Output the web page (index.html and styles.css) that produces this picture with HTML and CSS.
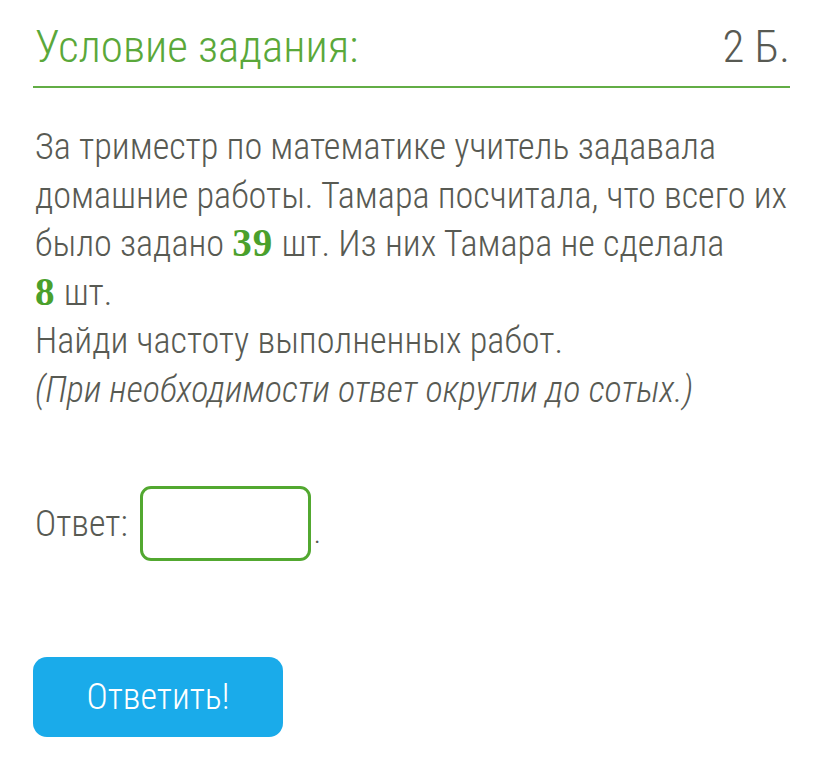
FILE: index.html
```html
<!DOCTYPE html>
<html lang="ru">
<head>
<meta charset="utf-8">
<link rel="stylesheet" href="styles.css">
</head>
<body>
<div class="page">
  <div class="header">
    <div class="title">Условие задания:</div>
    <div class="points">2 Б.</div>
  </div>
  <div class="task">
    <p class="text">За триместр по математике учитель задавала домашние работы. Тамара посчитала, что всего их было задано <span class="num">39</span> шт. Из них Тамара не сделала <span class="nowrap"><span class="num">8</span> шт.</span></p>
    <p class="text">Найди частоту выполненных работ.</p>
    <p class="text hint">(При необходимости ответ округли до сотых.)</p>
  </div>
  <div class="answer">
    <span class="label">Ответ:</span>
    <span class="box"></span>
    <span class="dot">.</span>
  </div>
  <button class="submit">Ответить!</button>
</div>
</body>
</html>
```

FILE: styles.css
```css
html, body {
  margin: 0;
  padding: 0;
  background: #ffffff;
}
.page {
  padding: 19px 33px 0 35px;
  font-family: "Roboto Condensed", Roboto, "Liberation Sans", sans-serif;
  font-weight: 300;
  font-stretch: condensed;
  color: #585a53;
}
.header {
  display: flex;
  justify-content: space-between;
  align-items: baseline;
  font-size: 45px;
  line-height: 55px;
  padding-bottom: 12px;
  border-bottom: 2px solid #62ad45;
  margin-left: -2px;
  padding-left: 2px;
}
.title {
  color: #5aa83a;
}
.points {
  color: #585a53;
}
.task {
  margin-top: 35px;
}
.text {
  margin: 0;
  font-size: 36.2px;
  line-height: 48.5px;
}
.nowrap {
  white-space: nowrap;
}
.hint {
  font-style: italic;
}
.num {
  font-family: "Liberation Serif", "DejaVu Serif", serif;
  font-weight: 700;
  font-size: 39px;
  line-height: 1;
  color: #4aa02c;
  font-stretch: normal;
  font-style: normal;
  letter-spacing: 1px;
}
.answer {
  display: flex;
  align-items: center;
  margin-top: 72px;
  font-size: 36px;
}
.label {
  margin-right: 12px;
}
.box {
  display: inline-block;
  width: 165px;
  height: 69px;
  border: 3px solid #52a830;
  border-radius: 11px;
}
.dot {
  align-self: flex-end;
  margin-left: 3px;
  margin-bottom: 6px;
  font-size: 30px;
  line-height: 44px;
}
.submit {
  display: flex;
  align-items: center;
  justify-content: center;
  margin-top: 96px;
  margin-left: -2px;
  width: 250px;
  height: 80px;
  border: none;
  border-radius: 14px;
  background: #1aabea;
  color: #ffffff;
  font-family: "Roboto Condensed", Roboto, "Liberation Sans", sans-serif;
  font-weight: 300;
  font-stretch: condensed;
  font-size: 36px;
  padding: 0;
}
```
